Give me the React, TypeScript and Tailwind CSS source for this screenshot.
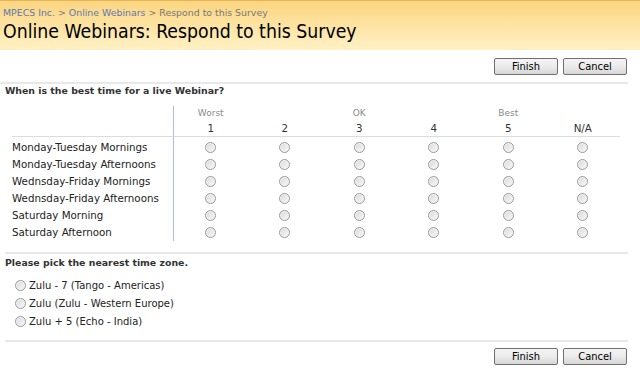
import React from "react"

const font = { fontFamily: '"DejaVu Sans", Verdana, sans-serif' }

const rows = [
  "Monday-Tuesday Mornings",
  "Monday-Tuesday Afternoons",
  "Wednsday-Friday Mornings",
  "Wednsday-Friday Afternoons",
  "Saturday Morning",
  "Saturday Afternoon",
]

const scale = [
  { label: "Worst", num: "1" },
  { label: "", num: "2" },
  { label: "OK", num: "3" },
  { label: "", num: "4" },
  { label: "Best", num: "5" },
  { label: "", num: "N/A" },
]

const zones = ["Zulu - 7 (Tango - Americas)", "Zulu (Zulu - Western Europe)", "Zulu + 5 (Echo - India)"]

const Radio = () => (
  <span className="inline-block w-[11px] h-[11px] rounded-full border border-[#9a9a9a] bg-gradient-to-br from-[#d8d8d8] to-[#fafafa] shadow-[inset_0_0_0_1px_#f4f4f4]" />
)

const Button = ({ children }: { children: React.ReactNode }) => (
  <button
    className="w-[64px] h-[17px] rounded-[2px] border border-[#707070] bg-gradient-to-b from-[#f4f4f4] via-[#ebebeb] to-[#d6d6d6] text-[11px] leading-none text-black"
    style={{ fontFamily: '"DejaVu Sans Condensed", Tahoma, sans-serif' }}
  >
    {children}
  </button>
)

const Buttons = () => (
  <div className="flex justify-end gap-[5px] pr-[13px]">
    <Button>Finish</Button>
    <Button>Cancel</Button>
  </div>
)

export default function App() {
  return (
    <div className="w-[640px] h-[374px] bg-white overflow-hidden text-[#333]" style={font}>
      {/* header */}
      <div className="h-[50px] border-t border-[#e3b65a] bg-gradient-to-b from-[#fbd57f] to-[#fff1c4] px-[3px]">
        <div className="text-[9.4px] leading-none pt-[7px] text-[#777]">
          <span className="text-[#5f78b0]">MPECS Inc.</span>
          <span> &gt; </span>
          <span className="text-[#5f78b0]">Online Webinars</span>
          <span> &gt; Respond to this Survey</span>
        </div>
        <div
          className="text-[19.3px] leading-none mt-[5px] text-black"
          style={{ fontFamily: '"DejaVu Sans Condensed", Tahoma, sans-serif' }}
        >
          Online Webinars: Respond to this Survey
        </div>
      </div>

      <div className="pt-[8px]">
        <Buttons />
      </div>
      <div className="h-[2px] bg-[#e8e8e8] mt-[7px] w-[628px]" />

      <div className="pl-[5px] pt-[1px] text-[9.4px] leading-[12px] font-bold text-[#333]">
        When is the best time for a live Webinar?
      </div>

      {/* matrix */}
      <div className="ml-[12px] mt-[9px] w-[608px] grid grid-cols-[161px_repeat(6,1fr)] text-[10.3px]">
        <div />
        {scale.map((s, i) => (
          <div key={i} className={`h-[15px] pt-[1px] text-center text-[#8a8a8a] text-[9px] ${i === 0 ? "border-l border-[#a9c1ea]" : ""}`}>
            {s.label}
          </div>
        ))}
        <div className="border-b border-[#dcdcdc]" />
        {scale.map((s, i) => (
          <div key={i} className={`h-[16px] text-center text-[#333] border-b border-[#dcdcdc] ${i === 0 ? "border-l border-l-[#a9c1ea]" : ""}`}>
            {s.num}
          </div>
        ))}
        <div className="h-[2px]" />
        <div className="h-[2px] border-l border-[#a9c1ea] col-span-6" />
        {rows.map((r) => (
          <React.Fragment key={r}>
            <div className="h-[17px] flex items-center text-[#222]">{r}</div>
            {scale.map((_, i) => (
              <div key={i} className={`h-[17px] flex items-center justify-center ${i === 0 ? "border-l border-[#a9c1ea]" : ""}`}>
                <Radio />
              </div>
            ))}
          </React.Fragment>
        ))}
      </div>

      <div className="h-[2px] bg-[#e8e8e8] mt-[11px] ml-[5px] w-[623px]" />
      <div className="pl-[5px] pt-[1px] text-[9.4px] leading-[15px] font-bold text-[#333]">Please pick the nearest time zone.</div>

      <div className="mt-[8px] pl-[15px] flex flex-col gap-[4px] text-[10px] text-[#222]">
        {zones.map((z) => (
          <div key={z} className="h-[14px] flex items-center gap-[3px]">
            <Radio />
            <span>{z}</span>
          </div>
        ))}
      </div>

      <div className="h-[2px] bg-[#e8e8e8] mt-[12px] ml-[5px] w-[623px]" />
      <div className="pt-[6px]">
        <Buttons />
      </div>
    </div>
  )
}
